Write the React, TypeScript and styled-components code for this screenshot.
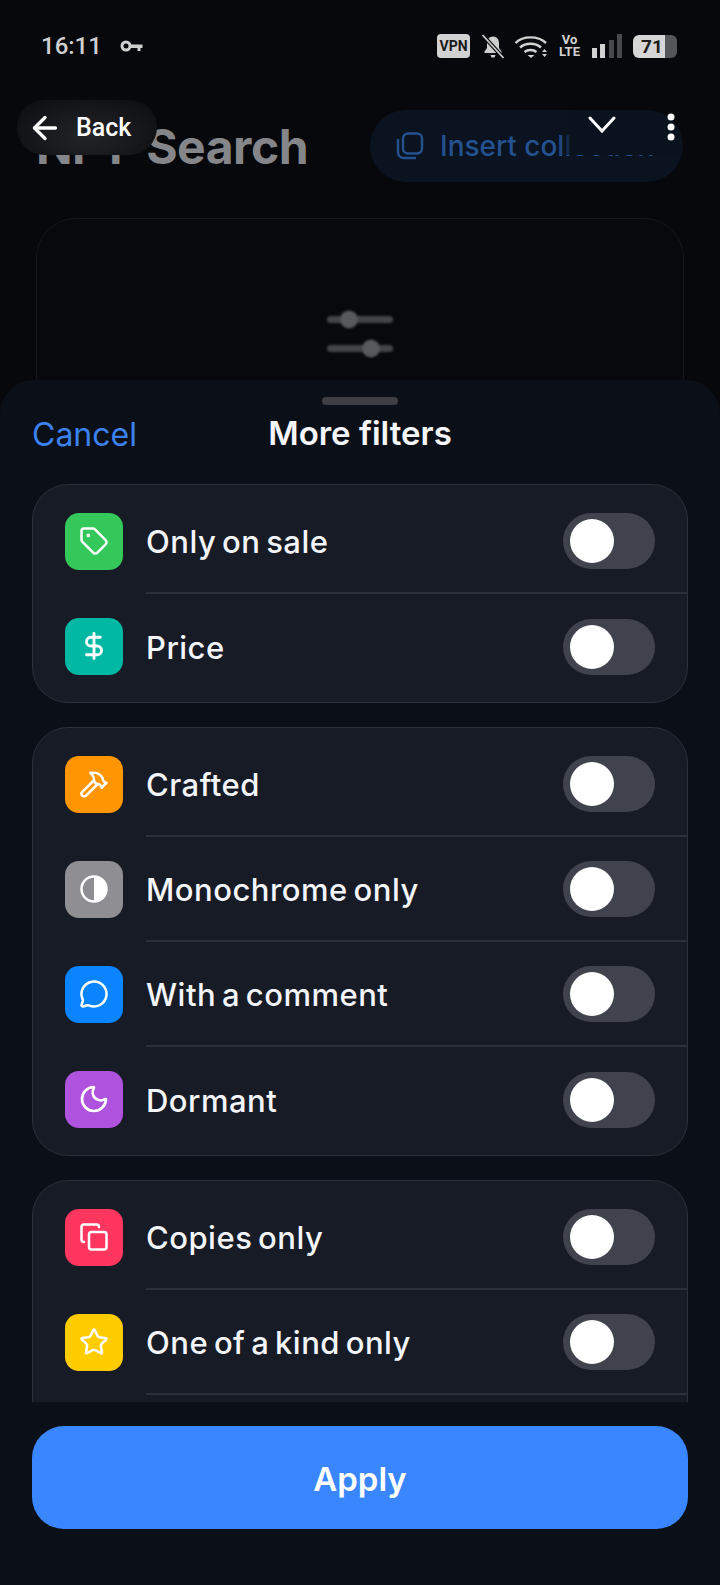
import * as React from "react";
import styled, { createGlobalStyle } from "styled-components";
import { Tag, DollarSign, Hammer, MessageCircle, Moon, Copy, Star, ArrowLeft } from "lucide-react";

const GlobalStyle = createGlobalStyle`
  html, body {
    margin: 0;
    padding: 0;
    background: #07080b;
  }
`;

const Screen = styled.div`
  position: relative;
  width: 720px;
  height: 1585px;
  display: flex;
  flex-direction: column;
  overflow: hidden;
  background: #07080b;
  font-family: Inter, "Noto Sans", sans-serif;
`;

const Backdrop = styled.div`
  height: 380px;
  flex: none;
`;

const StatusBar = styled.div`
  height: 92px;
  padding: 0 43px 0 41px;
  box-sizing: border-box;
  display: flex;
  align-items: center;
  color: #cfcfcf;
`;

const Clock = styled.span`
  font-family: Roboto, sans-serif;
  font-size: 24px;
  font-weight: 500;
  margin-right: 18px;
`;

const StatusRight = styled.div`
  margin-left: auto;
  display: flex;
  align-items: center;
`;

const VpnBadge = styled.span`
  width: 33px;
  height: 24px;
  border-radius: 4px;
  background: #d2d2d2;
  color: #1a1a1a;
  font-family: Roboto, sans-serif;
  font-size: 14px;
  font-weight: 700;
  display: flex;
  align-items: center;
  justify-content: center;
  margin-right: 11px;
`;

const BellSlot = styled.span`
  display: flex;
  margin-right: 9px;
`;

const VoLte = styled.span`
  font-family: Roboto, sans-serif;
  font-size: 13px;
  line-height: 12px;
  font-weight: 700;
  color: #d2d2d2;
  text-align: center;
  margin: 0 12px 0 11px;
`;

const Battery = styled.span`
  width: 44px;
  height: 23px;
  margin-left: 11px;
  border-radius: 6px;
  background: linear-gradient(90deg, #d6d6d6 0 72%, #55565a 72% 100%);
  color: #1c1c1c;
  font-family: Roboto, sans-serif;
  font-size: 19px;
  font-weight: 700;
  display: flex;
  align-items: center;
  justify-content: center;
  padding-right: 6px;
  box-sizing: border-box;
`;

const HeaderRow = styled.div`
  height: 72px;
  margin: 18px 0 0;
  padding: 0 37px 0 36px;
  display: flex;
  align-items: center;
  justify-content: space-between;
`;

const PageTitle = styled.h1`
  margin: 0;
  color: #85868a;
  font-size: 48px;
  font-weight: 700;
  letter-spacing: -0.5px;
  word-spacing: 4px;
`;

const InsertPill = styled.div`
  width: 313px;
  height: 72px;
  border-radius: 36px;
  background: #0a131f;
  color: #24518f;
  font-size: 28px;
  font-weight: 500;
  display: flex;
  align-items: center;
  gap: 16px;
  padding-left: 26px;
  box-sizing: border-box;
  white-space: nowrap;
  overflow: hidden;
`;

const DimCard = styled.div`
  margin: 36px 36px 0;
  height: 260px;
  padding-top: 89px;
  box-sizing: border-box;
  border: 1px solid #15171c;
  border-radius: 40px;
  background: #08090c;
  display: flex;
  justify-content: center;
  align-items: flex-start;
`;

const BackPill = styled.div`
  position: absolute;
  left: 17px;
  top: 100px;
  width: 140px;
  height: 55px;
  border-radius: 28px;
  background: radial-gradient(ellipse at 50% 65%, #232426 0%, #17181b 50%, #0b0c0f 100%);
  color: #fff;
  font-family: Roboto, sans-serif;
  font-size: 25px;
  font-weight: 500;
  display: flex;
  align-items: center;
  gap: 13px;
  padding-left: 10px;
  box-sizing: border-box;
`;

const TopActions = styled.div`
  position: absolute;
  left: 558px;
  top: 110px;
  width: 124px;
  height: 45px;
  border-radius: 0 36px 0 0;
  background: linear-gradient(90deg, rgba(10, 18, 29, 0) 0, #0a121d 16px);
  display: flex;
  align-items: flex-start;
  padding: 3px 0 0 30px;
  box-sizing: border-box;
  gap: 51px;
`;

const Sheet = styled.div`
  position: relative;
  flex: 1;
  min-height: 0;
  display: flex;
  flex-direction: column;
  border-radius: 34px 34px 0 0;
  background: #0b0f17;
`;

const Handle = styled.div`
  width: 76px;
  height: 8px;
  flex: none;
  margin: 17px auto 0;
  border-radius: 4px;
  background: #3d3f45;
`;

const SheetHeader = styled.div`
  position: relative;
  height: 58px;
  flex: none;
  margin-bottom: 21px;
  display: flex;
  align-items: center;
  justify-content: center;
`;

const CancelLink = styled.span`
  position: absolute;
  left: 32px;
  top: 10px;
  color: #3b82f0;
  font-size: 32px;
`;

const SheetTitle = styled.h2`
  margin: 0 0 2px;
  color: #f4f6fa;
  font-size: 33px;
  font-weight: 600;
`;

const Scroller = styled.div`
  flex: 1;
  min-height: 0;
  overflow: hidden;
  padding: 0 32px;
  display: flex;
  flex-direction: column;
  gap: 24px;
`;

const Card = styled.div<{ $clipped?: boolean }>`
  flex: none;
  border: 1px solid #2c303a;
  border-radius: 36px;
  background: #161b26;
  padding: 4px 0 ${(p) => (p.$clipped ? "40px" : "3px")};
`;

const Row = styled.div`
  display: flex;
  align-items: center;
  padding-left: 32px;
`;

const IconTile = styled.div<{ $color: string }>`
  width: 58px;
  height: 57px;
  flex: none;
  margin: 0 23px 1px 0;
  border-radius: 14px;
  background: ${(p) => p.$color};
  color: #fff;
  display: flex;
  align-items: center;
  justify-content: center;
`;

const RowBody = styled.div<{ $divider: boolean }>`
  flex: 1;
  height: 105px;
  padding-right: 32px;
  box-sizing: border-box;
  display: flex;
  align-items: center;
  justify-content: space-between;
  border-bottom: ${(p) => (p.$divider ? "2px solid #2b2f3a" : "none")};
`;

const RowLabel = styled.span`
  color: #f3f5fa;
  font-size: 31px;
  font-weight: 500;
  letter-spacing: 0.5px;
  word-spacing: -3px;
  padding-top: 1px;
`;

const SwitchTrack = styled.div`
  width: 92px;
  height: 56px;
  border-radius: 28px;
  background: #40434e;
  padding: 6px 7px;
  box-sizing: border-box;
`;

const SwitchThumb = styled.div`
  width: 44px;
  height: 44px;
  border-radius: 50%;
  background: #fff;
`;

const Footer = styled.div`
  flex: none;
  padding: 24px 32px 56px;
`;

const ApplyButton = styled.div`
  height: 103px;
  border-radius: 32px;
  background: #3a86ff;
  color: #fff;
  font-size: 33px;
  font-weight: 600;
  padding-top: 2px;
  box-sizing: border-box;
  display: flex;
  align-items: center;
  justify-content: center;
`;

const GlyphSvg = styled.svg`
  filter: blur(0.8px);
`;

const HalfCircle = () => (
  <svg width="30" height="30" viewBox="0 0 24 24">
    <circle cx="12" cy="12" r="10" fill="none" stroke="currentColor" strokeWidth="2" />
    <path d="M12 2a10 10 0 0 1 0 20z" fill="currentColor" />
  </svg>
);

const KeyIcon = () => (
  <svg width="23" height="14" viewBox="0 0 23 14" fill="none">
    <circle cx="6" cy="7" r="4" stroke="#cfcfcf" strokeWidth="3" />
    <path d="M10 5.5h12.5v3.5h-2v3h-3v-3H10z" fill="#cfcfcf" />
  </svg>
);

const BellOff = () => (
  <svg width="24" height="25" viewBox="0 0 24 25" fill="#cfcfcf">
    <path d="M12 2.5c-3.800 0-6 3-6 6.500v5l-2.500 3.500v1.500h17v-1.500l-2.500-3.500V9c0-3.500-2.200-6.500-6-6.500z" />
    <path d="M9.500 21h5l-1 2.500h-3z" />
    <path d="M1.500 1l21 23" stroke="#07080b" strokeWidth="4" />
    <path d="M1.500 1l21 23" stroke="#cfcfcf" strokeWidth="1.800" />
  </svg>
);

const WifiIcon = () => (
  <svg width="34" height="25" viewBox="0 0 34 25" fill="none" stroke="#d2d2d2" strokeWidth="2.400">
    <path d="M1.500 9C9 1.500 24 1.500 32 9" />
    <path d="M6 13.500c5.500-5 15.500-5 21 0" />
    <path d="M10.500 18c3-2.600 9-2.600 12 0" />
    <path d="M13.500 21l3.500 3 3.500-3z" fill="#d2d2d2" stroke="none" />
    <path d="M28 18l2.500-3 2.500 3zM28 20l2.500 3 2.500-3z" fill="#d2d2d2" stroke="none" />
  </svg>
);

const SignalBars = () => (
  <svg width="30" height="24" viewBox="0 0 30 24">
    <rect x="0" y="14" width="5" height="10" fill="#d2d2d2" />
    <rect x="8" y="10" width="5" height="14" fill="#d2d2d2" />
    <rect x="17" y="6" width="5" height="18" fill="#48494d" />
    <rect x="25" y="0" width="5" height="24" fill="#48494d" />
  </svg>
);

const StackIcon = () => (
  <svg width="28" height="28" viewBox="0 0 28 28" fill="none" stroke="#24518f" strokeWidth="2.400">
    <rect x="7" y="1.500" width="19" height="20" rx="5" />
    <path d="M2 7v13c0 3.500 2.500 6 6 6h12" />
  </svg>
);

const SliderGlyph = () => (
  <GlyphSvg width="66" height="50" viewBox="0 0 66 50">
    <rect x="0" y="8" width="66" height="7" rx="3.500" fill="#434448" />
    <rect x="0" y="37" width="66" height="7" rx="3.500" fill="#434448" />
    <circle cx="22" cy="11.500" r="9" fill="#58595d" />
    <circle cx="44" cy="40.500" r="9" fill="#58595d" />
  </GlyphSvg>
);

const Chevron = () => (
  <svg width="28" height="24" viewBox="0 0 28 24" fill="none" stroke="#fff" strokeWidth="3" strokeLinecap="round">
    <path d="M2 5l12 13L26 5" />
  </svg>
);

const MoreDots = () => (
  <svg width="8" height="28" viewBox="0 0 8 28" fill="#fff">
    <circle cx="4" cy="4" r="3.500" />
    <circle cx="4" cy="14" r="3.500" />
    <circle cx="4" cy="24" r="3.500" />
  </svg>
);

type FilterItem = { label: string; color: string; icon: React.ReactNode };

const iconProps = { size: 30, strokeWidth: 2 };

const groups: FilterItem[][] = [
  [
    { label: "Only on sale", color: "#34c759", icon: <Tag {...iconProps} /> },
    { label: "Price", color: "#00b8a3", icon: <DollarSign {...iconProps} strokeWidth={2.3} /> },
  ],
  [
    { label: "Crafted", color: "#ff9500", icon: <Hammer {...iconProps} /> },
    { label: "Monochrome only", color: "#8e8e93", icon: <HalfCircle /> },
    { label: "With a comment", color: "#0a84ff", icon: <MessageCircle {...iconProps} /> },
    { label: "Dormant", color: "#af52de", icon: <Moon {...iconProps} size={32} /> },
  ],
  [
    { label: "Copies only", color: "#ff375f", icon: <Copy {...iconProps} /> },
    { label: "One of a kind only", color: "#ffcc00", icon: <Star {...iconProps} /> },
  ],
];

const App = () => (
  <Screen>
    <GlobalStyle />
    <Backdrop>
      <StatusBar>
        <Clock>16:11</Clock>
        <KeyIcon />
        <StatusRight>
          <VpnBadge>VPN</VpnBadge>
          <BellSlot>
            <BellOff />
          </BellSlot>
          <WifiIcon />
          <VoLte>
            Vo
            <br />
            LTE
          </VoLte>
          <SignalBars />
          <Battery>71</Battery>
        </StatusRight>
      </StatusBar>
      <HeaderRow>
        <PageTitle>NFT Search</PageTitle>
        <InsertPill>
          <StackIcon />
          Insert collection
        </InsertPill>
      </HeaderRow>
      <DimCard>
        <SliderGlyph />
      </DimCard>
    </Backdrop>

    <BackPill>
      <ArrowLeft size={36} strokeWidth={2.2} />
      Back
    </BackPill>
    <TopActions>
      <Chevron />
      <MoreDots />
    </TopActions>

    <Sheet>
      <Handle />
      <SheetHeader>
        <CancelLink>Cancel</CancelLink>
        <SheetTitle>More filters</SheetTitle>
      </SheetHeader>
      <Scroller>
        {groups.map((rows, groupIndex) => {
          const clipped = groupIndex === groups.length - 1;
          return (
            <Card key={groupIndex} $clipped={clipped}>
              {rows.map((item, index) => (
                <Row key={item.label}>
                  <IconTile $color={item.color}>{item.icon}</IconTile>
                  <RowBody $divider={clipped || index < rows.length - 1}>
                    <RowLabel>{item.label}</RowLabel>
                    <SwitchTrack>
                      <SwitchThumb />
                    </SwitchTrack>
                  </RowBody>
                </Row>
              ))}
            </Card>
          );
        })}
      </Scroller>
      <Footer>
        <ApplyButton>Apply</ApplyButton>
      </Footer>
    </Sheet>
  </Screen>
);

export default App;
